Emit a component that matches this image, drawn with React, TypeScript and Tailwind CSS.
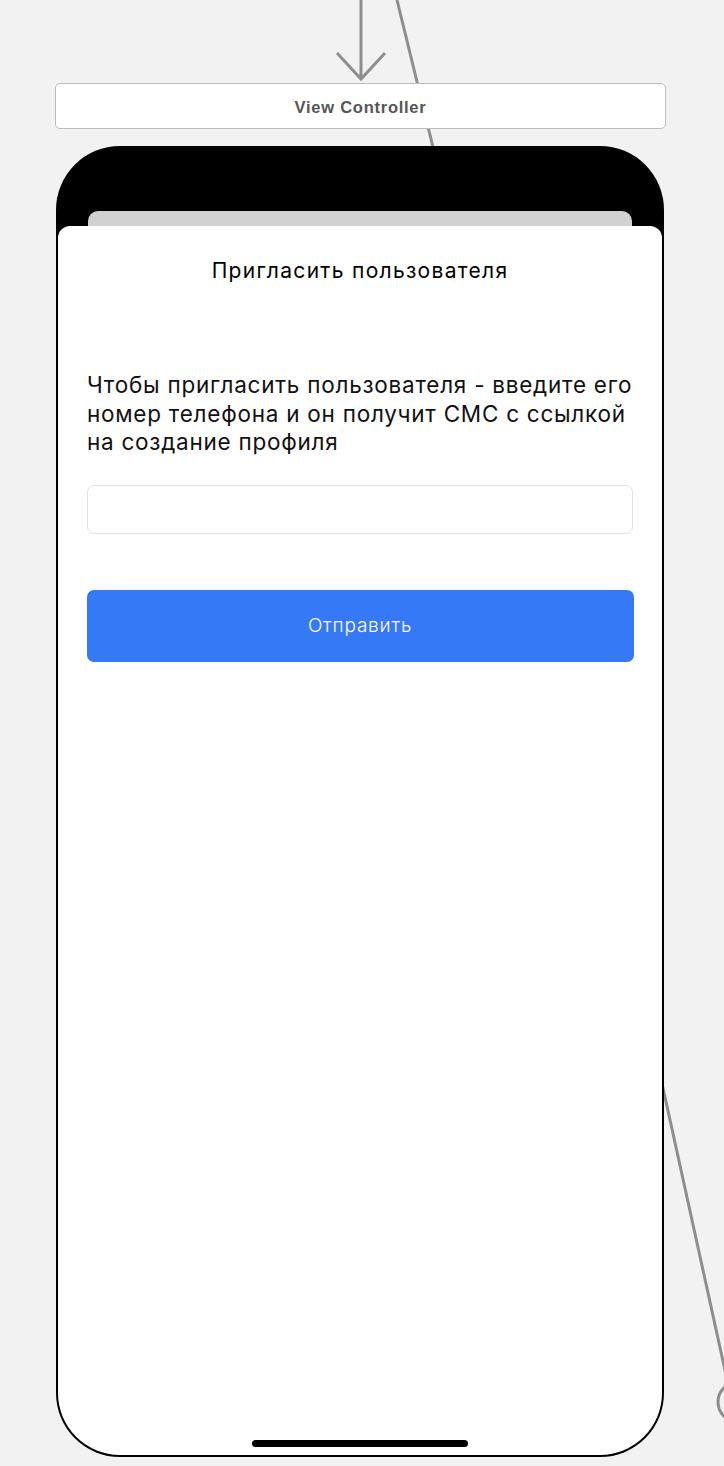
import React from "react";

export default function App() {
  return (
    <div
      className="relative w-[724px] h-[1466px] overflow-hidden bg-[#f2f2f2]"
      style={{ fontFamily: "Inter, 'Noto Sans', sans-serif" }}
    >
      <svg
        className="absolute inset-0"
        width="724"
        height="1466"
        viewBox="0 0 724 1466"
        fill="none"
      >
        <line x1="361" y1="0" x2="361" y2="79" stroke="#8e8e8e" strokeWidth="3" />
        <polyline points="337,53 361,79 385,53" stroke="#8e8e8e" strokeWidth="3" fill="none" />
        <polyline points="397,0 663,1088 728,1384" stroke="#8e8e8e" strokeWidth="3" fill="none" />
        <circle cx="738" cy="1402" r="20" stroke="#8e8e8e" strokeWidth="3" fill="none" />
      </svg>

      <div className="relative flex flex-col pt-[83px] px-[55px]">
        <div className="h-[46px] w-[611px] rounded-[5px] border border-[#bdbdbd] bg-white flex items-center justify-center">
          <span
            className="mt-[2px] text-[16.5px] font-bold text-[#555555] tracking-[0.75px]"
            style={{ fontFamily: "'Liberation Sans', Arial, sans-serif" }}
          >
            View Controller
          </span>
        </div>

        <div className="mt-[17px] ml-[1px] w-[608px] h-[1311px] rounded-[64px] bg-black p-[2px] pt-0 overflow-hidden flex flex-col">
          <div className="h-[65px] shrink-0" />
          <div className="mx-[30px] h-[15px] shrink-0 rounded-t-[10px] bg-[#d1d1d1]" />
          <div className="flex-1 bg-white rounded-t-[12px] rounded-b-[62px] flex flex-col items-center">
            <div className="mt-[31px] text-[21px] leading-[28px] tracking-[1.3px] text-black">
              Пригласить пользователя
            </div>
            <div className="w-full px-[29px] mt-[86px] text-[22.5px] leading-[28.5px] tracking-[0.75px] text-[#111111]">
              Чтобы пригласить пользователя - введите его номер телефона и он получит СМС с ссылкой на создание профиля
            </div>
            <div className="mt-[28px] w-[546px] h-[49px] rounded-[7px] border border-[#e3e3e3] bg-white" />
            <div className="mt-[56px] w-[547px] h-[72px] rounded-[7px] bg-[#3579f6] flex items-center justify-center">
              <span className="mt-[2px] text-[19px] font-light tracking-[0.8px] text-white">Отправить</span>
            </div>
            <div className="flex-1" />
            <div className="mb-[8px] w-[216px] h-[7px] rounded-full bg-black" />
          </div>
        </div>
      </div>
    </div>
  );
}
